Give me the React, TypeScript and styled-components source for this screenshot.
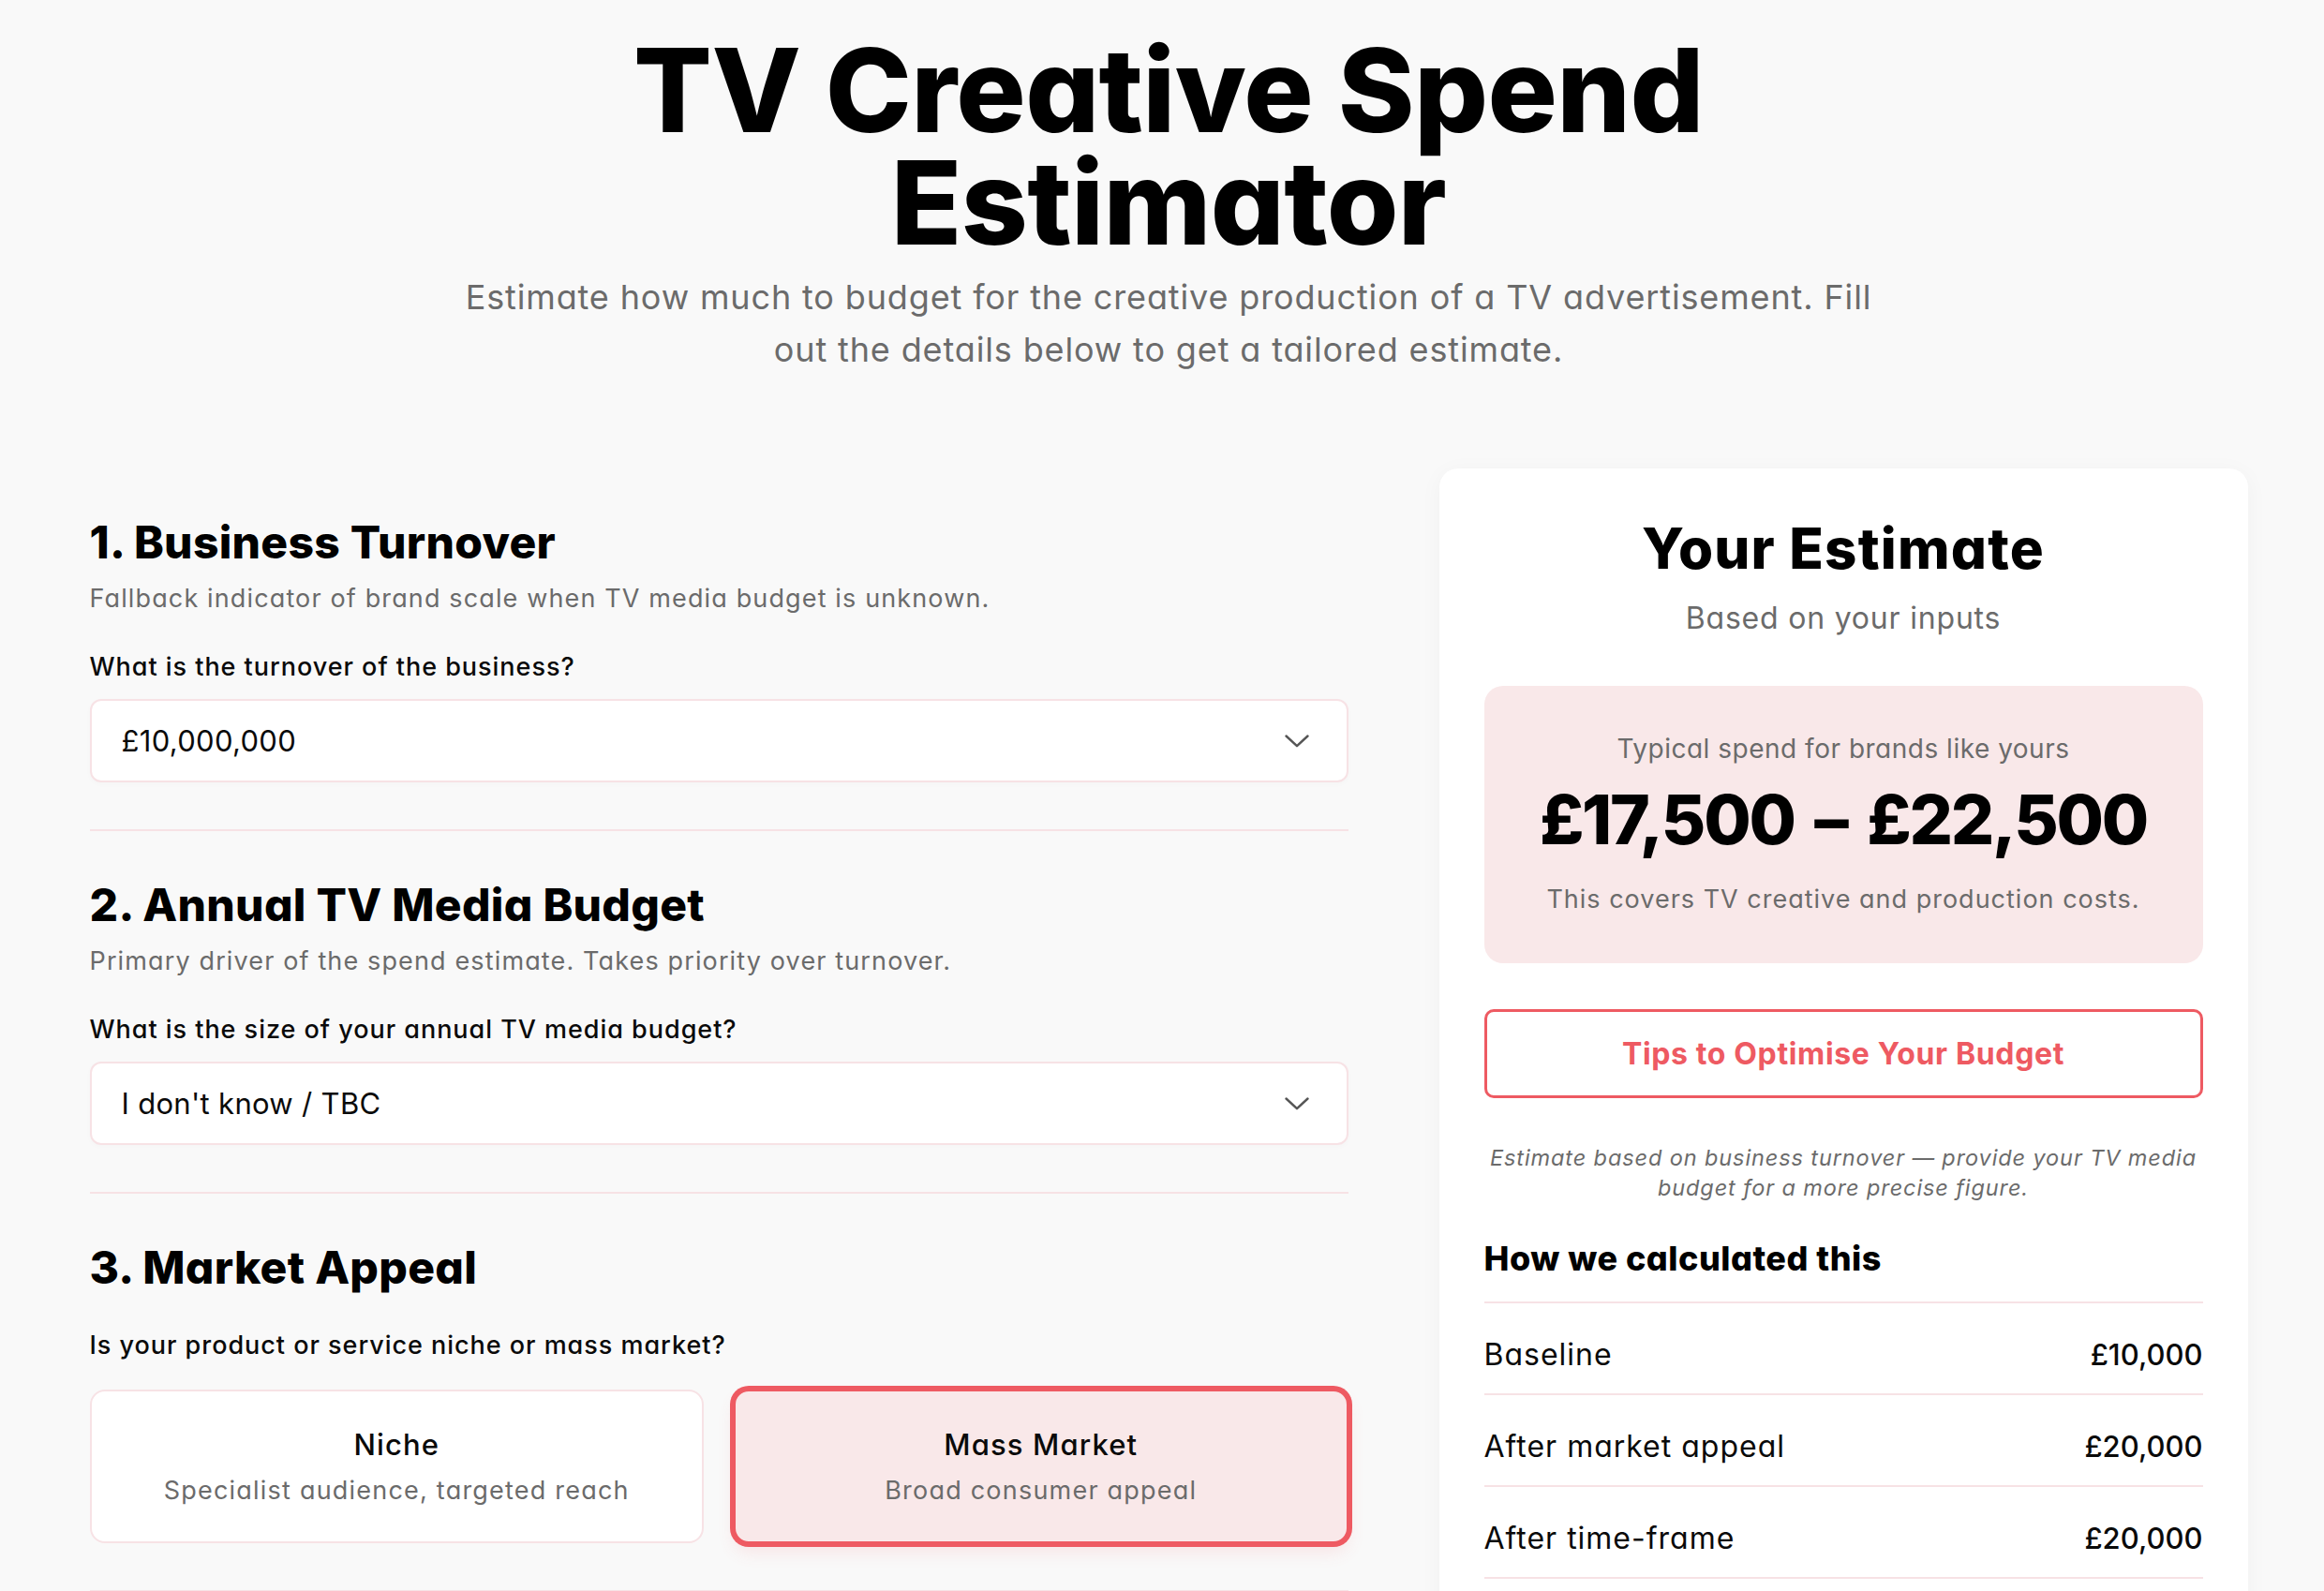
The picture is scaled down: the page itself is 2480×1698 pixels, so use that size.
import React from "react";
import styled, { createGlobalStyle } from "styled-components";

const GlobalStyle = createGlobalStyle`
  * { box-sizing: border-box; }
  html, body { margin: 0; padding: 0; }
  body {
    background: #f9f9f9;
    font-family: Inter, "Noto Sans", "Liberation Sans", sans-serif;
    font-feature-settings: "cv11" 1;
    color: #0a0a0a;
    -webkit-font-smoothing: antialiased;
  }
`;

const coral = "#ee5a62";
const softBorder = "#f7e2e5";
const pinkFill = "#f9e8e9";
const muted = "#6b6b6b";

const Page = styled.div`
  padding: 36px 0 120px 14px;
`;

const Header = styled.header`
  text-align: center;
`;

const Title = styled.h1`
  margin: 0;
  font-size: 124px;
  line-height: 120px;
  font-weight: 800;
  letter-spacing: -0.005em;
  color: #000;
`;

const Subtitle = styled.p`
  margin: 13px auto 0;
  max-width: 1530px;
  font-size: 36px;
  line-height: 56px;
  letter-spacing: 0.024em;
  color: ${muted};
`;

const Main = styled.main`
  display: grid;
  grid-template-columns: 1343px 863px;
  column-gap: 97px;
  justify-content: center;
  align-items: start;
  margin-top: 99px;
`;

const FormColumn = styled.div`
  display: flex;
  flex-direction: column;
`;

const Section = styled.section`
  padding: 50px 0;
  border-bottom: 2px solid ${softBorder};
`;

const SectionTitle = styled.h2`
  margin: 0;
  font-size: 48px;
  line-height: 58px;
  font-weight: 800;
  letter-spacing: 0.006em;
  color: #000;
`;

const SectionDesc = styled.p`
  margin: 12px 0 0;
  font-size: 27px;
  line-height: 38px;
  letter-spacing: 0.042em;
  color: ${muted};
`;

const Label = styled.label`
  display: block;
  margin-top: 35px;
  font-size: 27px;
  line-height: 38px;
  font-weight: 500;
  letter-spacing: 0.036em;
`;

const Select = styled.div`
  margin-top: 15px;
  height: 89px;
  display: flex;
  align-items: center;
  justify-content: space-between;
  padding: 0 40px 0 32px;
  background: #fff;
  border: 2px solid ${softBorder};
  border-radius: 12px;
  font-size: 31px;
  letter-spacing: 0.01em;
  box-shadow: 0 2px 6px rgba(0, 0, 0, 0.02);
`;

const OptionGrid = styled.div`
  margin-top: 28px;
  display: grid;
  grid-template-columns: 1fr 1fr;
  gap: 32px;
`;

const OptionCard = styled.div<{ $selected?: boolean }>`
  padding: 35px 20px;
  text-align: center;
  border-radius: 16px;
  background: ${(p) => (p.$selected ? pinkFill : "#fff")};
  border: 2px solid ${(p) => (p.$selected ? coral : softBorder)};
  box-shadow: ${(p) =>
    p.$selected
      ? `0 0 0 4px ${coral}, 0 10px 18px rgba(238, 90, 98, 0.12)`
      : "none"};
`;

const OptionTitle = styled.div`
  font-size: 31px;
  line-height: 44px;
  font-weight: 500;
  letter-spacing: 0.037em;
`;

const OptionSub = styled.div`
  margin-top: 8px;
  font-size: 27px;
  line-height: 38px;
  letter-spacing: 0.045em;
  color: ${muted};
`;

const EstimateCard = styled.aside`
  background: #fff;
  border-radius: 20px;
  padding: 49px 48px 60px;
  box-shadow: 0 4px 24px rgba(0, 0, 0, 0.04);
  text-align: center;
`;

const EstimateTitle = styled.h2`
  margin: 0;
  font-size: 60px;
  line-height: 72px;
  font-weight: 800;
  letter-spacing: 0.02em;
  color: #000;
`;

const EstimateSub = styled.p`
  margin: 17px 0 0;
  font-size: 32px;
  line-height: 44px;
  letter-spacing: 0.025em;
  color: ${muted};
`;

const RangeBox = styled.div`
  margin-top: 50px;
  background: ${pinkFill};
  border-radius: 20px;
  padding: 47px 30px 49px;
`;

const RangeCaption = styled.p<{ $top?: boolean }>`
  margin: ${(p) => (p.$top ? "0" : "22px 0 0")};
  font-size: ${(p) => (p.$top ? "28px" : "27px")};
  line-height: ${(p) => (p.$top ? "40px" : "38px")};
  letter-spacing: ${(p) => (p.$top ? "0.018em" : "0.037em")};
  color: ${muted};
`;

const RangeValue = styled.div`
  margin-top: 12px;
  font-size: 73px;
  line-height: 88px;
  font-weight: 800;
  letter-spacing: -0.031em;
  word-spacing: 8px;
  color: #000;
`;

const TipsButton = styled.button`
  margin-top: 49px;
  width: 100%;
  height: 95px;
  background: #fff;
  border: 3px solid ${coral};
  border-radius: 10px;
  color: ${coral};
  font-family: inherit;
  font-feature-settings: "cv11" 1;
  font-size: 32px;
  font-weight: 700;
  letter-spacing: 0.02em;
  cursor: pointer;
`;

const Note = styled.p`
  margin: 48px 0 0;
  font-size: 23.5px;
  line-height: 32px;
  font-style: italic;
  letter-spacing: 0.038em;
  color: ${muted};
`;

const CalcTitle = styled.h3`
  margin: 35px 0 0;
  padding-bottom: 22px;
  border-bottom: 2px solid ${softBorder};
  text-align: left;
  font-size: 36px;
  line-height: 48px;
  font-weight: 800;
  letter-spacing: 0.014em;
  color: #000;
`;

const CalcRow = styled.div`
  display: flex;
  justify-content: space-between;
  align-items: baseline;
  padding: 33px 0 19px;
  border-bottom: 2px solid ${softBorder};
  font-size: 32px;
  line-height: 44px;
`;

const CalcLabel = styled.span`
  letter-spacing: 0.031em;
`;

const CalcValue = styled.span`
  font-size: 31px;
  font-weight: 500;
`;

const Chevron = () => (
  <svg width="26" height="14" viewBox="0 0 26 14" fill="none">
    <polyline
      points="1.5,1.5 13,12.2 24.5,1.5"
      stroke="#555"
      strokeWidth="2.4"
      strokeLinecap="round"
      strokeLinejoin="round"
    />
  </svg>
);

const rows = [
  ["Baseline", "£10,000"],
  ["After market appeal", "£20,000"],
  ["After time-frame", "£20,000"],
  ["Final estimate", "£20,000"],
];

export default function App() {
  return (
    <>
      <GlobalStyle />
      <Page>
        <Header>
          <Title>
            TV Creative Spend
            <br />
            Estimator
          </Title>
          <Subtitle>
            Estimate how much to budget for the creative production of a TV
            advertisement. Fill out the details below to get a tailored
            estimate.
          </Subtitle>
        </Header>
        <Main>
          <FormColumn>
            <Section>
              <SectionTitle>1. Business Turnover</SectionTitle>
              <SectionDesc>
                Fallback indicator of brand scale when TV media budget is
                unknown.
              </SectionDesc>
              <Label>What is the turnover of the business?</Label>
              <Select>
                <span>£10,000,000</span>
                <Chevron />
              </Select>
            </Section>
            <Section>
              <SectionTitle>2. Annual TV Media Budget</SectionTitle>
              <SectionDesc>
                Primary driver of the spend estimate. Takes priority over
                turnover.
              </SectionDesc>
              <Label>What is the size of your annual TV media budget?</Label>
              <Select>
                <span>I don't know / TBC</span>
                <Chevron />
              </Select>
            </Section>
            <Section>
              <SectionTitle>3. Market Appeal</SectionTitle>
              <Label>Is your product or service niche or mass market?</Label>
              <OptionGrid>
                <OptionCard>
                  <OptionTitle>Niche</OptionTitle>
                  <OptionSub>Specialist audience, targeted reach</OptionSub>
                </OptionCard>
                <OptionCard $selected>
                  <OptionTitle>Mass Market</OptionTitle>
                  <OptionSub>Broad consumer appeal</OptionSub>
                </OptionCard>
              </OptionGrid>
            </Section>
            <Section>
              <SectionTitle>4. Time-frame</SectionTitle>
              <Label>When do you need the advert ready?</Label>
              <Select>
                <span>3+ months</span>
                <Chevron />
              </Select>
            </Section>
          </FormColumn>
          <EstimateCard>
            <EstimateTitle>Your Estimate</EstimateTitle>
            <EstimateSub>Based on your inputs</EstimateSub>
            <RangeBox>
              <RangeCaption $top>Typical spend for brands like yours</RangeCaption>
              <RangeValue>£17,500 – £22,500</RangeValue>
              <RangeCaption>
                This covers TV creative and production costs.
              </RangeCaption>
            </RangeBox>
            <TipsButton>Tips to Optimise Your Budget</TipsButton>
            <Note>
              Estimate based on business turnover — provide your TV media
              budget for a more precise figure.
            </Note>
            <CalcTitle>How we calculated this</CalcTitle>
            {rows.map(([label, value]) => (
              <CalcRow key={label}>
                <CalcLabel>{label}</CalcLabel>
                <CalcValue>{value}</CalcValue>
              </CalcRow>
            ))}
          </EstimateCard>
        </Main>
      </Page>
    </>
  );
}
